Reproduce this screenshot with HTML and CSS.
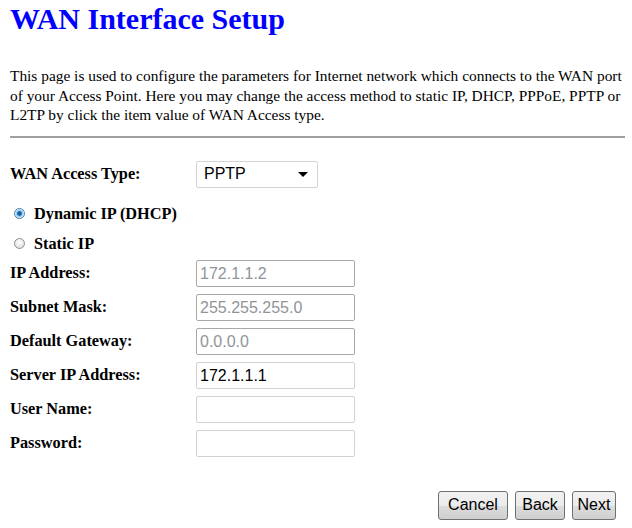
FILE: index.html
```html
<!DOCTYPE html>
<html>
<head>
<meta charset="utf-8">
<link rel="stylesheet" href="styles.css">
</head>
<body>
<div class="page">
  <h1 class="title">WAN Interface Setup</h1>
  <p class="intro">This page is used to configure the parameters for Internet network which connects to the WAN port of your Access Point. Here you may change the access method to static IP, DHCP, PPPoE, PPTP or L2TP by click the item value of WAN Access type.</p>
  <div class="rule"></div>
  <div class="row row-type">
    <span class="label">WAN Access Type:</span>
    <div class="select"><span>PPTP</span><span class="arrow"></span></div>
  </div>
  <div class="radio-row first">
    <span class="radio checked"></span><span class="label">Dynamic IP (DHCP)</span>
  </div>
  <div class="radio-row">
    <span class="radio"></span><span class="label">Static IP</span>
  </div>
  <div class="fields">
    <div class="row"><span class="label">IP Address:</span><div class="input disabled">172.1.1.2</div></div>
    <div class="row"><span class="label">Subnet Mask:</span><div class="input disabled">255.255.255.0</div></div>
    <div class="row"><span class="label">Default Gateway:</span><div class="input disabled">0.0.0.0</div></div>
    <div class="row"><span class="label">Server IP Address:</span><div class="input">172.1.1.1</div></div>
    <div class="row"><span class="label">User Name:</span><div class="input"></div></div>
    <div class="row"><span class="label">Password:</span><div class="input"></div></div>
  </div>
  <div class="buttons">
    <button class="btn btn-cancel">Cancel</button>
    <button class="btn btn-back">Back</button>
    <button class="btn btn-next">Next</button>
  </div>
</div>
</body>
</html>
```
FILE: styles.css
```css
html, body {
  margin: 0;
  padding: 0;
  background: #ffffff;
}
.page {
  padding: 0 7px 0 10px;
  font-family: "Liberation Serif", "Times New Roman", serif;
  color: #000;
}
.title {
  margin: 0;
  padding-top: 1px;
  font-size: 30px;
  line-height: 36px;
  font-weight: bold;
  color: #0000ff;
}
.intro {
  margin: 29px 0 0 0;
  font-size: 15.4px;
  line-height: 19.5px;
}
.rule {
  margin-top: 11px;
  height: 2px;
  background: #a0a0a0;
}
.label {
  font-weight: bold;
  font-size: 16.3px;
}
.row {
  display: flex;
  align-items: center;
  height: 27px;
}
.row .label {
  width: 186px;
  flex: none;
}
.row-type {
  margin-top: 23px;
}
.select {
  display: flex;
  align-items: center;
  justify-content: space-between;
  padding: 0 9px 0 7px;
  box-sizing: border-box;
  width: 122px;
  height: 27px;
  border: 1px solid #d4d4d4;
  border-radius: 2px;
  font-family: "Liberation Sans", Arial, sans-serif;
  font-size: 16px;
}
.arrow {
  width: 0;
  height: 0;
  border-left: 5px solid transparent;
  border-right: 5px solid transparent;
  border-top: 5px solid #000;
}
.radio-row {
  display: flex;
  align-items: center;
  height: 20px;
  margin-top: 10px;
}
.radio-row.first {
  margin-top: 16px;
}
.radio {
  width: 11px;
  height: 11px;
  box-sizing: border-box;
  border-radius: 50%;
  border: 1px solid #8f8f8f;
  background: radial-gradient(circle at 50% 35%, #ffffff 0%, #e6e6e6 60%, #cfcfcf 100%);
  margin: 0 9px 0 4px;
}
.radio.checked {
  border-color: #3c7fb1;
  background: radial-gradient(circle at 50% 50%, #0f4f8f 0%, #1e6fb8 30%, #8ec4ea 45%, #e8f3fb 70%, #c9e1f3 100%);
}
.fields {
  margin-top: 6px;
  display: flex;
  flex-direction: column;
  gap: 7px;
}
.input {
  width: 159px;
  height: 27px;
  box-sizing: border-box;
  border: 1px solid #d2d2d2;
  border-radius: 2px;
  font-family: "Liberation Sans", Arial, sans-serif;
  font-size: 16px;
  line-height: 25px;
  padding-left: 3px;
  color: #000;
}
.input.disabled {
  border-color: #a8a8a8;
  color: #8f9499;
}
.buttons {
  display: flex;
  justify-content: flex-end;
  gap: 7px;
  margin-top: 34px;
  padding-right: 9px;
}
.btn {
  font-family: "Liberation Sans", Arial, sans-serif;
  font-size: 16px;
  height: 29px;
  padding: 0;
  border: 1px solid #707070;
  border-radius: 3px;
  background: linear-gradient(#f2f2f2 0%, #ebebeb 50%, #dddddd 51%, #cfcfcf 100%);
  color: #000;
}
.btn-cancel { width: 70px; }
.btn-back { width: 50px; }
.btn-next { width: 44px; }
```
